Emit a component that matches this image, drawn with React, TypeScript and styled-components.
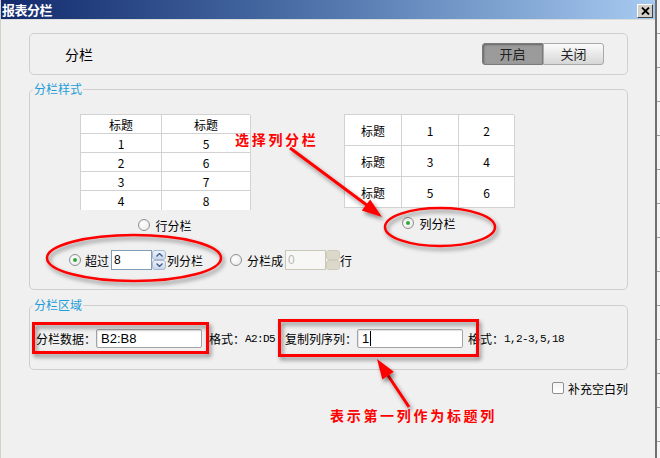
import React from "react";
import styled, { createGlobalStyle } from "styled-components";

const GlobalStyle = createGlobalStyle`
  html, body {
    margin: 0;
    padding: 0;
  }
  body {
    background: #f0f0f0;
    font-family: "Noto Sans CJK SC", "Noto Sans", sans-serif;
    font-size: 12px;
    color: #000;
    overflow: hidden;
  }
`;

const Page = styled.div`
  position: relative;
  display: flex;
  width: 660px;
  height: 458px;
  overflow: hidden;
`;

const Window = styled.div`
  display: flex;
  flex-direction: column;
  width: 655px;
  height: 458px;
  box-sizing: border-box;
  border-left: 1px solid #d4d0c8;
  background: #f0f0f0;
`;

const SideStrip = styled.div`
  width: 5px;
  height: 458px;
  box-sizing: border-box;
  border-left: 2px solid #6f6f6f;
  background: repeating-linear-gradient(
    to bottom,
    #f4f4f4 0,
    #f4f4f4 33px,
    #9c9c9c 33px,
    #9c9c9c 34px
  );
`;

const TitleBar = styled.div`
  display: flex;
  align-items: center;
  justify-content: space-between;
  height: 19px;
  padding: 0 2px 0 1px;
  background: linear-gradient(to right, #122a6c, #4a6ea6 45%, #a6caf0);
  border-bottom: 1px solid #dcdcdc;
`;

const Title = styled.span`
  color: #fff;
  font-weight: 700;
  font-size: 13px;
  line-height: 19px;
  letter-spacing: -0.5px;
`;

const CloseButton = styled.div`
  display: flex;
  align-items: center;
  justify-content: center;
  width: 16px;
  height: 14px;
  box-sizing: border-box;
  margin-top: 2px;
  background: #d4d0c8;
  border-top: 1px solid #fff;
  border-left: 1px solid #fff;
  border-right: 1px solid #404040;
  border-bottom: 1px solid #404040;
`;

const Body = styled.div`
  display: flex;
  flex-direction: column;
  padding: 13px 27px 0 28px;
`;

const HeaderPanel = styled.div`
  display: flex;
  align-items: center;
  justify-content: space-between;
  height: 42px;
  box-sizing: border-box;
  padding: 0 23px 0 35px;
  border: 1px solid #cfcfcf;
  border-radius: 5px;
`;

const HeaderTitle = styled.span`
  font-size: 14px;
`;

const Toggle = styled.div`
  display: flex;
  height: 22px;
`;

const ToggleButton = styled.div<{ $active?: boolean }>`
  width: 61px;
  box-sizing: border-box;
  text-align: center;
  font-size: 13px;
  line-height: 20px;
  color: #222;
  border: 1px solid ${(p) => (p.$active ? "#7a7a7a" : "#a9a9a9")};
  border-radius: ${(p) => (p.$active ? "3px 0 0 3px" : "0 3px 3px 0")};
  background: ${(p) =>
    p.$active ? "#9b9b9b" : "linear-gradient(#fbfbfb, #d6d6d6)"};
  box-shadow: ${(p) =>
    p.$active ? "inset 1px 1px 2px rgba(0, 0, 0, 0.35)" : "none"};
`;

const Group = styled.fieldset<{ $top: number; $padTop: number; $padBottom: number }>`
  margin: ${(p) => p.$top}px 0 0;
  padding: ${(p) => p.$padTop}px 0 ${(p) => p.$padBottom}px;
  border: 1px solid #cfcfcf;
  border-radius: 5px;
  min-width: 0;
`;

const Legend = styled.legend`
  margin-left: 3px;
  padding: 0 1px;
  color: #1e9ed8;
  font-size: 12px;
  line-height: 16px;
`;

const TablesRow = styled.div`
  display: flex;
  gap: 94px;
  margin-left: 50px;
`;

const Column = styled.div`
  display: flex;
  flex-direction: column;
  align-items: center;
  width: 170px;
`;

const Grid = styled.div<{ $cols: string; $rowH: number }>`
  display: grid;
  grid-template-columns: ${(p) => p.$cols};
  grid-auto-rows: ${(p) => p.$rowH}px;
  width: 170px;
  background: #fff;
  border-top: 1px solid #d2d2d2;
  border-left: 1px solid #d2d2d2;
  box-sizing: border-box;
`;

const Cell = styled.div<{ $last?: boolean }>`
  display: flex;
  align-items: center;
  justify-content: center;
  box-sizing: border-box;
  border-right: 1px solid #d2d2d2;
  border-bottom: ${(p) => (p.$last ? "none" : "1px solid #d2d2d2")};
  font-size: 12px;
`;

const RadioRow = styled.div`
  display: flex;
  align-items: center;
  gap: 5px;
  height: 14px;
  margin-top: 8px;
`;

const Radio = styled.span<{ $checked?: boolean; $ml?: number }>`
  display: flex;
  align-items: center;
  justify-content: center;
  width: 12px;
  height: 12px;
  margin-left: ${(p) => p.$ml ?? 0}px;
  box-sizing: border-box;
  border: 1px solid #8e8f8f;
  border-radius: 50%;
  background: radial-gradient(circle at 40% 40%, #ffffff, #e6e6e6);

  &::after {
    content: "";
    display: ${(p) => (p.$checked ? "block" : "none")};
    width: 4px;
    height: 4px;
    border-radius: 50%;
    background: #2fa83a;
  }
`;

const OptionRow = styled.div`
  display: flex;
  align-items: center;
  height: 20px;
  margin: 18px 0 0 39px;
`;

const Label = styled.span<{ $ml?: number }>`
  margin-left: ${(p) => p.$ml ?? 0}px;
  font-size: 12px;
  white-space: nowrap;
`;

const SpinBox = styled.div<{ $ml?: number }>`
  display: flex;
  height: 20px;
  margin-left: ${(p) => p.$ml ?? 0}px;
`;

const SpinInput = styled.div<{ $disabled?: boolean }>`
  width: 41px;
  height: 20px;
  box-sizing: border-box;
  padding-left: 2px;
  border: 1px solid ${(p) => (p.$disabled ? "#cac6b8" : "#7f9db9")};
  background: ${(p) => (p.$disabled ? "#f7f7f5" : "#fff")};
  color: ${(p) => (p.$disabled ? "#b9b9b9" : "#000")};
  font-family: "Liberation Sans", Arial, sans-serif;
  font-size: 12px;
  line-height: 18px;
`;

const Spinner = styled.div`
  display: flex;
  flex-direction: column;
  width: 14px;
`;

const SpinButton = styled.div<{ $disabled?: boolean }>`
  display: flex;
  align-items: center;
  justify-content: center;
  height: 10px;
  box-sizing: border-box;
  border: 1px solid ${(p) => (p.$disabled ? "#d0ccbe" : "#a7b8d2")};
  border-radius: 3px;
  background: ${(p) =>
    p.$disabled ? "#dcd8cb" : "linear-gradient(#eef3fb, #c9d6ea)"};
`;

const DataRow = styled.div`
  display: flex;
  align-items: center;
  height: 19px;
  margin-left: 6px;
`;

const TextInput = styled.div`
  display: flex;
  align-items: center;
  width: 106px;
  height: 19px;
  box-sizing: border-box;
  padding-left: 4px;
  border: 1px solid #a3a3a3;
  border-radius: 2px;
  background: #fff;
  box-shadow: inset 1px 1px 1px rgba(0, 0, 0, 0.12);
  font-family: "Liberation Sans", Arial, sans-serif;
  font-size: 13px;
`;

const Caret = styled.span`
  width: 1px;
  height: 15px;
  margin-left: 1px;
  background: #000;
`;

const Mono = styled.span`
  font-family: "Liberation Mono", "DejaVu Sans Mono", monospace;
  font-size: 11px;
  letter-spacing: -0.6px;
`;

const CheckRow = styled.div`
  display: flex;
  align-items: center;
  justify-content: flex-end;
  gap: 4px;
  height: 12px;
  margin-top: 12px;
`;

const CheckBox = styled.span`
  width: 12px;
  height: 12px;
  box-sizing: border-box;
  border: 1px solid #8e8f8f;
  border-radius: 2px;
  background: linear-gradient(#f4f4f4, #ffffff);
`;

const Overlay = styled.svg`
  position: absolute;
  left: 0;
  top: 0;
  pointer-events: none;
`;

const Note = styled.span<{ $x: number; $y: number }>`
  position: absolute;
  left: ${(p) => p.$x}px;
  top: ${(p) => p.$y}px;
  color: #ff0000;
  font-size: 14px;
  font-weight: 700;
  line-height: 16px;
  letter-spacing: 2.7px;
  white-space: nowrap;
`;

const Chevron = ({ up }: { up?: boolean }) => (
  <svg width="7" height="4" viewBox="0 0 7 4">
    <path
      d={up ? "M0.5 3.5 L3.5 0.5 L6.5 3.5" : "M0.5 0.5 L3.5 3.5 L6.5 0.5"}
      fill="none"
      stroke="#3b5a8a"
      strokeWidth="1.3"
    />
  </svg>
);

function Spin({ value, disabled, ml }: { value: string; disabled?: boolean; ml?: number }) {
  return (
    <SpinBox $ml={ml}>
      <SpinInput $disabled={disabled}>{value}</SpinInput>
      <Spinner>
        <SpinButton $disabled={disabled}>{!disabled && <Chevron up />}</SpinButton>
        <SpinButton $disabled={disabled}>{!disabled && <Chevron />}</SpinButton>
      </Spinner>
    </SpinBox>
  );
}

const leftRows = [
  ["标题", "标题"],
  ["1", "5"],
  ["2", "6"],
  ["3", "7"],
  ["4", "8"],
];

const rightRows = [
  ["标题", "1", "2"],
  ["标题", "3", "4"],
  ["标题", "5", "6"],
];

export default function App() {
  return (
    <>
      <GlobalStyle />
      <Page>
        <Window>
          <TitleBar>
            <Title>报表分栏</Title>
            <CloseButton>
              <svg width="9" height="8" viewBox="0 0 9 8">
                <path d="M1 0.5 L8 7.5 M8 0.5 L1 7.5" stroke="#000" strokeWidth="1.8" />
              </svg>
            </CloseButton>
          </TitleBar>

          <Body>
            <HeaderPanel>
              <HeaderTitle>分栏</HeaderTitle>
              <Toggle>
                <ToggleButton $active>开启</ToggleButton>
                <ToggleButton>关闭</ToggleButton>
              </Toggle>
            </HeaderPanel>

            <Group $top={6} $padTop={17} $padBottom={19}>
              <Legend>分栏样式</Legend>
              <TablesRow>
                <Column>
                  <Grid $cols="81px 89px" $rowH={19}>
                    {leftRows.map((row, i) =>
                      row.map((c, j) => (
                        <Cell key={`${i}-${j}`} $last={i === leftRows.length - 1}>
                          {c}
                        </Cell>
                      ))
                    )}
                  </Grid>
                  <RadioRow>
                    <Radio />
                    <Label>行分栏</Label>
                  </RadioRow>
                </Column>
                <Column>
                  <Grid $cols="57px 57px 56px" $rowH={31}>
                    {rightRows.map((row, i) =>
                      row.map((c, j) => <Cell key={`${i}-${j}`}>{c}</Cell>)
                    )}
                  </Grid>
                  <RadioRow>
                    <Radio $checked />
                    <Label>列分栏</Label>
                  </RadioRow>
                </Column>
              </TablesRow>

              <OptionRow>
                <Radio $checked />
                <Label $ml={4}>超过</Label>
                <Spin value="8" ml={2} />
                <Label $ml={1}>列分栏</Label>
                <Radio $ml={27} />
                <Label $ml={5}>分栏成</Label>
                <Spin value="0" disabled ml={2} />
                <Label>行</Label>
              </OptionRow>
            </Group>

            <Group $top={7} $padTop={16} $padBottom={21}>
              <Legend>分栏区域</Legend>
              <DataRow>
                <Label>分栏数据：</Label>
                <TextInput>B2:B8</TextInput>
                <Label $ml={7}>格式：</Label>
                <Mono>A2:D5</Mono>
                <Label $ml={10}>复制列序列：</Label>
                <TextInput>
                  1<Caret />
                </TextInput>
                <Label $ml={5}>格式：</Label>
                <Mono>1,2-3,5,18</Mono>
              </DataRow>
            </Group>

            <CheckRow>
              <CheckBox />
              <Label>补充空白列</Label>
            </CheckRow>
          </Body>
        </Window>
        <SideStrip />

        <Overlay width="660" height="458" viewBox="0 0 660 458">
          <defs>
            <filter id="shade" x="-20%" y="-20%" width="140%" height="140%">
              <feDropShadow dx="2" dy="3" stdDeviation="2" floodColor="#000" floodOpacity="0.45" />
            </filter>
          </defs>
          <g filter="url(#shade)" fill="none" stroke="#ff0000">
            <ellipse cx="440" cy="227" rx="55" ry="19" strokeWidth="2.5" />
            <ellipse cx="134" cy="258" rx="87" ry="23" strokeWidth="2.5" />
            <rect x="33.5" y="323.5" width="174" height="29" strokeWidth="3" />
            <rect x="279.5" y="320.5" width="198" height="35" strokeWidth="3" />
            <line x1="290" y1="148" x2="368" y2="206" strokeWidth="3" />
            <line x1="409" y1="407" x2="387" y2="374" strokeWidth="3" />
          </g>
          <g filter="url(#shade)" fill="#ff0000">
            <polygon points="382,217 361.8,210.6 370.2,199.4" />
            <polygon points="377,359 393.9,371.7 382.3,379.5" />
          </g>
        </Overlay>
        <Note $x={235} $y={131}>选择列分栏</Note>
        <Note $x={330} $y={407}>表示第一列作为标题列</Note>
      </Page>
    </>
  );
}
